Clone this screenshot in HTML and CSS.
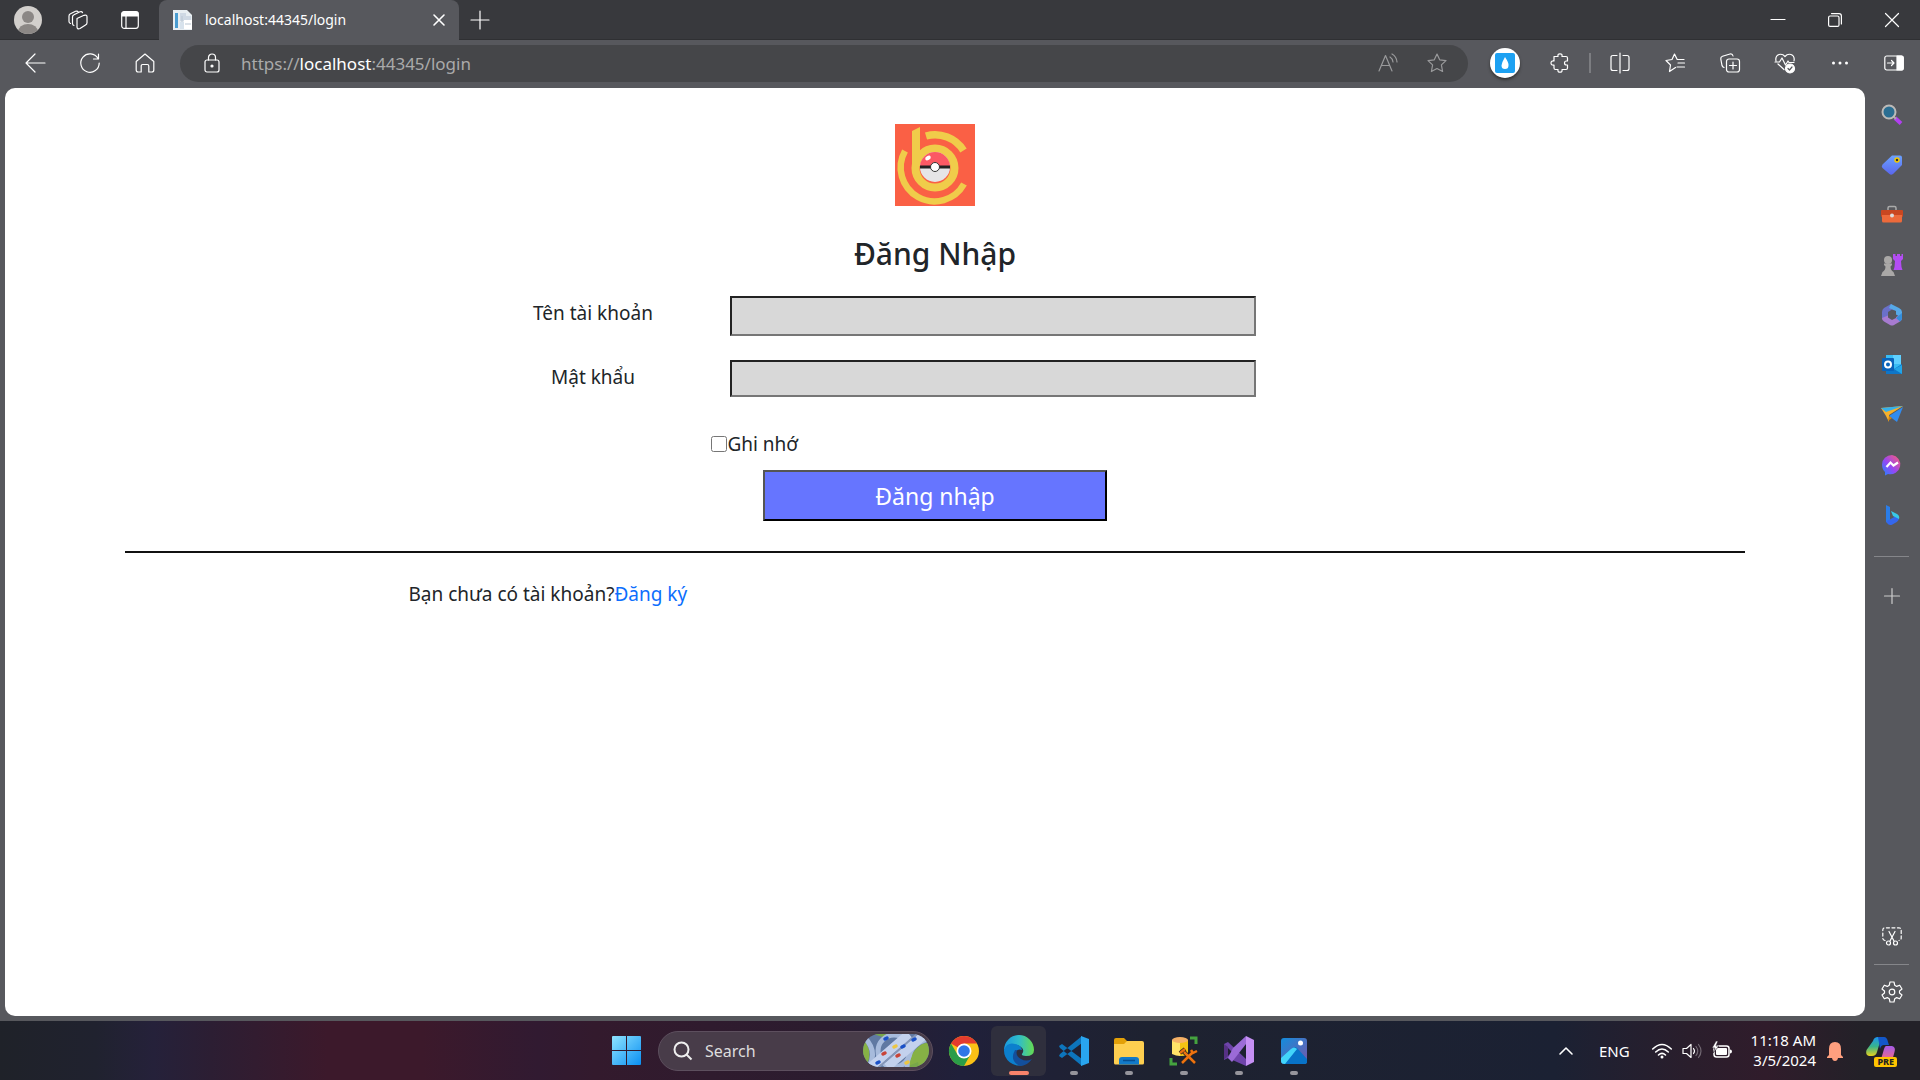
FILE: index.html
```html
<!DOCTYPE html>
<html lang="vi">
<head>
<meta charset="utf-8">
<title>localhost:44345/login</title>
<link rel="stylesheet" href="styles.css">
</head>
<body>
<div class="screen">
  <header class="tabstrip">
    <button class="avatar" aria-label="Profile"><svg viewBox="0 0 28 28" width="28" height="28"><defs><clipPath id="av"><circle cx="14" cy="14" r="14"/></clipPath></defs><g clip-path="url(#av)"><rect width="28" height="28" fill="#d2cfcc"/><circle cx="14" cy="11" r="6" fill="#8b8785"/><ellipse cx="14" cy="26" rx="10" ry="8" fill="#8b8785"/></g></svg></button>
    <button class="strip-btn" aria-label="Workspaces"><svg class="line" viewBox="0 0 22 22" width="22" height="22"><path d="M10 9.500l7-3.200q3-.8 3 1.500v6q0 1.500-1.500 2.200l-5.500 3.500q-3 1-3-1.500zM7 16.500q-1.500-.3-1.500-2V8q0-1.500 1.500-2.200l6-3q2-.6 2.500.8M3.500 14.500Q2 14 2 12.500V7q0-1.500 1.500-2.200l5-2.500q2-.6 2.500.5"/></svg></button>
    <button class="strip-btn" aria-label="Tab actions"><svg class="line" viewBox="0 0 20 20" width="20" height="20"><rect x="1.700" y="1.700" width="16.600" height="16.600" rx="2.500"/><path d="M2 3.500q0-1.500 1.500-1.500h13q1.500 0 1.500 1.500V6H2z" fill="#fff"/><path d="M6 6v12"/></svg></button>
    <div class="tab">
      <svg viewBox="0 0 20 20" width="20" height="20"><path d="M0 0h14l5 5v15H0z" fill="#e8eef2"/><path d="M2 3h3v15H2z" fill="#4a9cd0"/><path d="M7 3h6v3h5v5H7z" fill="#cfd9e4"/><path d="M7 12h4v7H7z" fill="#d7e2ec"/><path d="M11 10h8v9h-8z" fill="#fff"/><path d="M12 14h6M9 6v6" stroke="#b8c5d2"/></svg>
      <span class="tab-title">localhost:44345/login</span>
      <button class="tab-close" aria-label="Close tab"><svg class="line bold" viewBox="0 0 12 12" width="12" height="12"><path d="M1 1l10 10M11 1L1 11"/></svg></button>
    </div>
    <button class="new-tab" aria-label="New tab"><svg class="line" viewBox="0 0 18 18" width="18" height="18"><path d="M9 0v18M0 9h18"/></svg></button>
    <div class="window-controls">
      <button aria-label="Minimize"><svg class="line" viewBox="0 0 14 14" width="14" height="14"><path d="M0 6.500h14"/></svg></button>
      <button aria-label="Restore"><svg class="line" viewBox="0 0 14 14" width="14" height="14"><rect x=".6" y="3" width="10.400" height="10.400" rx="1.500"/><path d="M3.500.6h7.500q2.400 0 2.400 2.400v8"/></svg></button>
      <button aria-label="Close"><svg class="line" viewBox="0 0 14 14" width="14" height="14"><path d="M.5.5l13 13M13.500.5l-13 13"/></svg></button>
    </div>
  </header>

  <nav class="toolbar">
    <button class="tool" aria-label="Back"><svg class="line" viewBox="0 0 20 20" width="20" height="20"><path d="M20 10H1M10 1L1 10l9 9"/></svg></button>
    <button class="tool" aria-label="Refresh"><svg class="line" viewBox="0 0 20 20" width="20" height="20"><path d="M18 5.500A9.200 9.200 0 1 0 19.200 10M18.500 1v5h-5"/></svg></button>
    <button class="tool" aria-label="Home"><svg class="line" viewBox="0 0 20 20" width="20" height="20"><path d="M1.200 8.500L10 1l8.800 7.500V17q0 2-2 2h-3v-6q0-1.500-1.500-1.500h-4.600Q6.200 11.500 6.200 13v6h-3q-2 0-2-2z"/></svg></button>
    <div class="address">
      <svg class="line" viewBox="0 0 20 20" width="20" height="20"><rect x="3" y="7" width="14" height="12" rx="2"/><path d="M6.500 7V4.500a3.500 3.500 0 0 1 7 0V7"/><circle cx="10" cy="13" r="1" fill="#fff"/></svg>
      <span class="url">https://<b>localhost</b>:44345/login</span>
      <button class="dim" aria-label="Read aloud"><svg class="line" viewBox="0 0 20 20" width="20" height="20"><path d="M1 18L7.500 2.500 14 18M3.500 12.500h8M12 4q2.500 1.500 3 5M14 1q4.500 2.500 5 8"/></svg></button>
      <button class="dim" aria-label="Add to favorites"><svg class="line" viewBox="0 0 20 20" width="20" height="20"><path d="M10 1l2.700 5.800 6.300.8-4.600 4.300 1.200 6.600L10 15.500l-5.600 3 1.200-6.600L1 7.600l6.300-.8z"/></svg></button>
    </div>
    <button class="tool extension" aria-label="Extension"><svg viewBox="0 0 30 30" width="30" height="30"><circle cx="15" cy="15" r="15" fill="#fff"/><rect x="5" y="5" width="20" height="20" rx="2" fill="#1da1f2"/><path d="M15 9q4 6 3.500 8.500a3.500 3.500 0 0 1-7 0Q12 14 15 9z" fill="#fff"/></svg></button>
    <button class="tool" aria-label="Extensions"><svg class="line" viewBox="0 0 20 20" width="20" height="20"><path d="M4 3.500h4q-.5-2.700 2-2.700t2 2.700h4q1.500 0 1.500 1.500v3h-1q-2 0-2 2t2 2h1v3q0 1.500-1.500 1.500h-4q.5 2.700-2 2.700t-2-2.700H5.500Q4 16.500 4 15v-3q-3 .3-3-2t3-2z"/></svg></button>
    <span class="divider"></span>
    <button class="tool" aria-label="Split screen"><svg class="line" viewBox="0 0 20 20" width="20" height="20"><path d="M10 0v20M7 2.500H3q-2 0-2 2v11q0 2 2 2h4M13 2.500h4q2 0 2 2v11q0 2-2 2h-4"/></svg></button>
    <button class="tool" aria-label="Favorites"><svg class="line" viewBox="0 0 20 20" width="20" height="20"><path d="M10.500 14.500l-6 4 1-6.500L1 7.500l6-1L9.500 1l2.700 5.500H19M13 10h6.500M12 14h7.500"/></svg></button>
    <button class="tool" aria-label="Collections"><svg class="line" viewBox="0 0 20 20" width="20" height="20"><rect x="6.500" y="6" width="13" height="13" rx="2.500"/><path d="M13 9v7M9.500 12.500h7M4 14.500q-1.500-.5-2-2L.8 6Q.5 4 2.500 3.300L10 1q2.500-.5 3 2"/></svg></button>
    <button class="tool" aria-label="Browser essentials"><svg class="line" viewBox="0 0 20 20" width="20" height="20"><path d="M9 16.500L3 11M1 8Q0 3 4 1.500q3.500-1 6 2 2.500-3 6-2Q20 3 19 8M0 9h4.500L7 5l3.500 7L13 8l1 1.500h5"/><circle cx="15" cy="15.500" r="4.500" fill="#fff"/><path d="M13 15.500l1.500 1.500 2.500-3" stroke="#57585d"/></svg></button>
    <button class="tool" aria-label="More"><svg viewBox="0 0 20 20" width="20" height="20" fill="#fff"><circle cx="3.500" cy="10" r="1.500"/><circle cx="10" cy="10" r="1.500"/><circle cx="16.500" cy="10" r="1.500"/></svg></button>
    <button class="tool side-toggle" aria-label="Sidebar"><svg class="line" viewBox="0 0 20 20" width="20" height="20"><rect x=".8" y="3" width="18.400" height="14" rx="2"/><path d="M13 3h4.500q1.700 0 1.700 1.700v10.600q0 1.700-1.700 1.700H13z" fill="#fff"/><path d="M3.500 10h6M7.500 7.500L10 10l-2.500 2.500"/></svg></button>
  </nav>

  <div class="body-area">
    <main class="page">
      <form class="login">
        <svg class="logo" viewBox="0 0 80 82" width="80" height="82"><rect width="80" height="82" fill="#fa6045"/><g fill="none" stroke="#f0cc4a"><path d="M31 12A33.500 33.500 0 0 1 68.500 26.500" stroke-width="7.500"/><path d="M69 60A33.500 33.500 0 1 1 10 27" stroke-width="6.500"/><circle cx="40" cy="44" r="19.500" stroke-width="8"/></g><path d="M17 7l8-4v39h-8z" fill="#f0cc4a"/><circle cx="40" cy="43" r="15" fill="#e6e5e7"/><path d="M25 43a15 15 0 0 1 30 0z" fill="#fb5964"/><path d="M25 43h30" stroke="#222" stroke-width="3"/><circle cx="40" cy="43" r="4.500" fill="#fff" stroke="#333"/><ellipse cx="33" cy="34" rx="3" ry="2" fill="#fff" transform="rotate(-30 33 34)"/></svg>
        <h1>Đăng Nhập</h1>
        <div class="field">
          <label for="user">Tên tài khoản</label>
          <input class="entry tall" id="user" type="text">
        </div>
        <div class="field">
          <label for="pass">Mật khẩu</label>
          <input class="entry" id="pass" type="password">
        </div>
        <div class="remember"><input id="remember" type="checkbox"><label for="remember">Ghi nhớ</label></div>
        <button class="submit" type="button">Đăng nhập</button>
        <hr>
        <p class="register">Bạn chưa có tài khoản?<a href="#">Đăng ký</a></p>
      </form>
    </main>

    <aside class="sidebar">
      <button aria-label="Search"><svg viewBox="0 0 22 22" width="22" height="22"><path d="M14 14l6 5.500" stroke="#b13ff0" stroke-width="4"/><path d="M12 12l3 3" stroke="#aaa" stroke-width="2"/><circle cx="8" cy="8" r="6.500" fill="#2b6e92" stroke="#bdbab8" stroke-width="2"/></svg></button>
      <button aria-label="Shopping"><svg viewBox="0 0 22 22" width="22" height="22"><defs><linearGradient id="tg" x2="0" y2="1"><stop stop-color="#6ba2ff"/><stop offset="1" stop-color="#5a66ee"/></linearGradient></defs><path d="M11 1.500h8q2 0 2 2V11l-9 9q-2 1.500-3.500 0L1.500 14q-1.500-1.500 0-3.500z" fill="url(#tg)"/><circle cx="16" cy="6" r="2" fill="#333" stroke="#f5c900" stroke-width="1.500"/></svg></button>
      <button aria-label="Tools"><svg viewBox="0 0 22 22" width="22" height="22"><path d="M7 6V4q0-1.500 1.500-1.500h5Q15 2.500 15 4v2" fill="none" stroke="#aaa" stroke-width="1.500"/><rect y="6" width="22" height="7" rx="1" fill="#c94721"/><path d="M1 11h20v6q0 1.500-1.500 1.500h-17Q1 18.500 1 17z" fill="#ed6a3b"/><circle cx="11" cy="11.500" r="2" fill="#ddd"/></svg></button>
      <button aria-label="Games"><svg viewBox="0 0 22 24" width="22" height="24"><path d="M12 1h2.500v2h1.500V1h3v2h1.500V1H22v5l-2 2 .5 6 1 3h-9l1-3 .5-6-2-2z" fill="#b34df3"/><g fill="#aaa8a7"><circle cx="7" cy="7" r="4"/><path d="M3 10.500h8V12l-1.500 1.500q0 3.500 3 5.500l1.500 4H0l1.500-4q3-2 3-5.500L3 12z"/></g></svg></button>
      <button aria-label="Microsoft 365"><svg viewBox="0 0 22 22" width="22" height="22"><path d="M10 0L3 4Q1 5.500 1 8v7l6 3V9l8-4z" fill="#6a70c8"/><path d="M10 0l8 4q3 1.500 3 4v6l-6-3.500V7L8 4z" fill="#56a9e8"/><path d="M1 14l6-2.500 5 3L21 10v4q0 2.500-2 3.500l-6 3.500q-2 1-4 0l-6-3.500q-2-1-2-3.500z" fill="#a77bd0"/><path d="M7 8l4-2.500L15 8v6l-4 2-4-2.500z" fill="#57585d"/><path d="M15 14l6-5v5q0 2-2 3.500z" fill="#348fdc"/></svg></button>
      <button aria-label="Outlook"><svg viewBox="0 0 22 22" width="22" height="22"><path d="M5 1h15v17H5z" fill="#38bdf5"/><path d="M12 1h8v9h-8z" fill="#5fd0ff"/><path d="M5 13l8 2 8-5v10H5z" fill="#0f76c8"/><path d="M21 11v9l-8-5z" fill="#22a5e8"/><rect x="1" y="4" width="12" height="13" rx="1" fill="#0a63ba"/><circle cx="7" cy="10.500" r="3" fill="none" stroke="#fff" stroke-width="2"/></svg></button>
      <button aria-label="Drop"><svg viewBox="0 0 22 22" width="22" height="22"><path d="M0 4l22-2L8 11v7l-3-6z" fill="#f5b02b"/><path d="M0 4l22-2L5 8z" fill="#35b1ec"/><path d="M22 3l-6 15-8-6z" fill="#318cf0"/><path d="M8 12l-1 5 4-3z" fill="#d3820b"/></svg></button>
      <button aria-label="Messenger"><svg viewBox="0 0 22 22" width="22" height="22"><defs><linearGradient id="ms" x1="0" y1="1" x2="1" y2="0"><stop stop-color="#168bff"/><stop offset=".45" stop-color="#9646f5"/><stop offset="1" stop-color="#ff5e70"/></linearGradient></defs><path d="M11 1a10 9.700 0 1 1-4 19l-3 1.500V18Q1 15 1 10.500A10 9.500 0 0 1 11 1z" fill="url(#ms)"/><path d="M5.500 13l4-4.500 3 3 4.500-3" fill="none" stroke="#fff" stroke-width="2.200"/></svg></button>
      <button aria-label="Bing"><svg viewBox="0 0 22 22" width="22" height="22"><path d="M5 1l4 2v13l-1 4.500L5 18z" fill="#2a7de8"/><path d="M5 17l3-1 7-4 3 2q0 3-4 5l-3 1.700q-2 1-4-.7z" fill="#3467ed"/><path d="M10 7l6 3q3 2 2 5l-6-3z" fill="#37c9e8"/></svg></button>
      <span class="rule upper"></span>
      <button aria-label="Customize"><svg class="line soft" viewBox="0 0 16 16" width="16" height="16"><path d="M8 .5v15M.5 8h15"/></svg></button>
      <span class="grow"></span>
      <button aria-label="Screenshot"><svg class="line" viewBox="0 0 20 20" width="20" height="20"><path d="M3 14.500Q.8 14 .8 12V4Q.8 1.800 3 1.800h14q2.200 0 2.200 2.200v8q0 2-2.200 2.500" stroke-dasharray="3 2.500"/><path d="M7 5.500l5 9.500M13 5.500L8 15"/><circle cx="6.500" cy="17" r="2"/><circle cx="13.500" cy="17" r="2"/></svg></button>
      <span class="rule"></span>
      <button aria-label="Settings"><svg class="line" viewBox="0 0 22 22" width="22" height="22"><path d="M9 1h4l.7 3.200 2 1.200 3-1.200 2.300 3.800-2.500 2v2l2.500 2-2.300 3.800-3-1.200-2 1.200L13 21H9l-.7-3.200-2-1.200-3 1.200L1 14l2.500-2v-2L1 8l2.300-3.800 3 1.200 2-1.200z"/><circle cx="11" cy="11" r="2.800"/></svg></button>
    </aside>
  </div>

  <footer class="taskbar">
    <span></span>
    <div class="apps">
      <button class="app" aria-label="Start"><svg viewBox="0 0 29 29" width="29" height="29"><defs><linearGradient id="win" x2="1" y2="1"><stop stop-color="#8fe4ff"/><stop offset="1" stop-color="#0a8ff2"/></linearGradient></defs><path d="M0 1q0-1 1-1h13v14H0zM15 0h13q1 0 1 1v13H15zM0 15h14v14H1q-1 0-1-1zM15 15h14v13q0 1-1 1H15z" fill="url(#win)"/></svg></button>
      <div class="search">
        <svg viewBox="0 0 20 20" width="20" height="20" fill="none" stroke="#eee" stroke-width="2"><circle cx="8.500" cy="8.500" r="7"/><path d="M13.500 13.500l5 5"/></svg>
        <input type="text" placeholder="Search" aria-label="Search">
        <svg viewBox="0 0 66 33" width="66" height="33"><defs><clipPath id="pl"><rect width="66" height="33" rx="16.500"/></clipPath></defs><g clip-path="url(#pl)"><rect width="66" height="33" fill="#6079a2"/><path d="M0 5q11 12 3 28H0zM42 33q12-26 24-24v24z" fill="#86b145"/><path d="M10 0h22l-6 5zM55 28l-12 5h13z" fill="#78a74a"/><g fill="none" stroke="#a7bbdc" stroke-width="5"><circle cx="31" cy="17" r="16"/><path d="M1 3q14 14 5 30M66 5Q45 9 44 33"/></g><path d="M8 33L46 0M24 33L62 0" stroke="#c3d1ed" stroke-width="9"/><path d="M16 33L54 0" stroke="#8596b8" stroke-width="2"/><g stroke-width="3.500" stroke-linecap="round"><path d="M14 29l2-1M22 5l2-1M39 13l2-1M50 6l2-1" stroke="#1a50c8"/><path d="M20 20l2-1M34 22l2-1" stroke="#c84438"/><path d="M31 13l2-1M43 29l2-1" stroke="#ecc643"/></g></g></svg>
      </div>
      <button class="app" aria-label="Chrome"><svg viewBox="0 0 30 30" width="30" height="30"><circle cx="15" cy="15" r="15" fill="#fbc116"/><path d="M15 15L2 7.500A15 15 0 0 1 28 7.500H15z" fill="#e33b2e"/><path d="M2 7.500A15 15 0 0 0 15 30l6.500-11.500L15 15 8.500 18.500z" fill="#2a9d48"/><circle cx="15" cy="15" r="7.500" fill="#fff"/><circle cx="15" cy="15" r="5.800" fill="#2e76e8"/></svg></button>
      <button class="app active" aria-label="Edge"><svg viewBox="0 0 30 30" width="30" height="30"><defs><linearGradient id="eg" x2="1"><stop stop-color="#1998df"/><stop offset=".5" stop-color="#30bdc9"/><stop offset="1" stop-color="#66dc50"/></linearGradient></defs><path d="M0 14A15 15 0 0 1 30 14q0 6-8 6-5 0-4-2 3-4-1-7Q10 6 0 14z" fill="url(#eg)"/><path d="M0 14Q3 6 11 8q6 1 7 6-6-2-7 5 0 6 8 10A15 15 0 0 1 0 14z" fill="#0c7fcd"/><path d="M11 14q-6 11 5 16 7 0 12-7-6 3-11 0-6-3-4-9z" fill="#134f9c"/></svg></button>
      <button class="app running" aria-label="Visual Studio Code"><svg viewBox="0 0 30 30" width="30" height="30"><path d="M0 10l3-2 20 15v7L1 12zM0 20l3 2L23 7V0L1 18z" fill="#0d75bc"/><path d="M22 0l8 3v24l-8 3z" fill="#29a5ef"/></svg></button>
      <button class="app running" aria-label="File Explorer"><svg viewBox="0 0 30 30" width="30" height="30"><path d="M0 4q0-2 2-2h8l3 3v6H0z" fill="#e3a008"/><path d="M0 8h10l3-3h15q2 0 2 2v20q0 1.500-1.500 1.500h-27Q0 28.500 0 27z" fill="#fecf50"/><path d="M5 28.500V24q0-3 3-3h14q3 0 3 3v4.500z" fill="#127ac8"/><path d="M9 24.500h12" stroke="#064e91" stroke-width="1.500"/></svg></button>
      <button class="app running" aria-label="SQL Server"><svg viewBox="0 0 30 30" width="30" height="30"><path d="M3 4v14q8 4 16 0V4z" fill="#ffe368"/><path d="M11 4v16q5 0 8-2V4z" fill="#f3c313"/><ellipse cx="11" cy="4" rx="8" ry="3" fill="#f5b166"/><path d="M21 2h6v6M2 22v6h6" stroke="#45a33f" stroke-width="3" fill="none"/><path d="M13 27l11-11M15 16l11 11M11 17l5-4M22 14l2 3 4-2" stroke="#222" stroke-width="4" fill="none"/><path d="M13 27l11-11M15 16l11 11M11 17l5-4M22 14l2 3 4-2" stroke="#ee720f" stroke-width="2.500" fill="none"/></svg></button>
      <button class="app running" aria-label="Visual Studio"><svg viewBox="0 0 30 30" width="30" height="30"><path d="M0 8l4-2 18 17v7L4 22l-4 2z" fill="#6e44aa"/><path d="M4 12v8l4-4z" fill="#1e202e"/><path d="M4 22l4 4L22 8V0L9 12z" fill="#9b6bd7"/><path d="M22 0l8 4v22l-8 4z" fill="#c590f4"/><path d="M0 8l4 3v9l-4 4z" fill="#573185"/></svg></button>
      <button class="app running" aria-label="Photos"><svg viewBox="0 0 26 26" width="26" height="26"><defs><linearGradient id="ph" x2="1" y2="1"><stop stop-color="#128ddd"/><stop offset="1" stop-color="#7857a8"/></linearGradient></defs><rect width="26" height="26" rx="3" fill="url(#ph)"/><path d="M1 25L12 10q2-2 4 0l10 11v3q0 2-3 2H3z" fill="#0873c8"/><path d="M0 20l10-9q3-3 6 0L4 26Q0 26 0 23z" fill="#42d5fa"/><circle cx="19.500" cy="5" r="2.500" fill="#fff"/></svg></button>
    </div>
    <div class="tray">
      <button aria-label="Show hidden icons"><svg class="line tick" viewBox="0 0 14 10" width="14" height="10"><path d="M1 8l6-6 6 6"/></svg></button>
      <span class="lang">ENG</span>
      <div class="status">
        <svg class="line tick" viewBox="0 0 20 16" width="20" height="16"><path d="M.7 6q9.300-9 18.600 0M3.700 9q6.300-6 12.600 0M6.500 12q3.500-3.300 7 0"/><circle cx="10" cy="14" r="1.500" fill="#fff" stroke="none"/></svg>
        <svg class="line" viewBox="0 0 20 16" width="20" height="16"><path d="M1 5.500h3.500L9 1.500v13l-4.500-4H1zM11.500 5.500q2 2.500 0 5"/><path d="M14 3.500q3.500 4.500 0 9M16.500 1.500q5 6.500 0 13" stroke="#716872"/></svg>
        <svg viewBox="0 0 20 16" width="20" height="16"><rect x="2" y="3" width="15" height="11" rx="2.500" fill="none" stroke="#fff" stroke-width="1.500"/><rect x="4" y="5" width="11" height="7" rx="1" fill="#fff"/><path d="M18 6.500q2 0 2 2t-2 2z" fill="#fff"/><path d="M4-2L0 5h3l-2 5 6-7H4l2-5z" fill="#fff" stroke="#2a1e2c" stroke-width=".6"/></svg>
      </div>
      <div class="clock"><span>11:18 AM</span><span>3/5/2024</span></div>
      <svg class="bell" viewBox="0 0 16 20" width="16" height="20"><path d="M2 14V8Q2 1 8 1t6 7v6l2 2v1H0v-1zM5 17h6q-.5 3-3 3t-3-3z" fill="#ffa07f"/></svg>
      <button class="copilot" aria-label="Copilot"><svg viewBox="0 0 30 30" width="30" height="30"><defs><linearGradient id="c1" x2="0" y2="1"><stop stop-color="#1c95f0"/><stop offset=".5" stop-color="#38b48c"/><stop offset="1" stop-color="#e8d21c"/></linearGradient><linearGradient id="c2" x2="0" y2="1"><stop stop-color="#a45be8"/><stop offset="1" stop-color="#f76a7c"/></linearGradient></defs><path d="M7 5q1-4 5-4h6q-3 1-4 5l-3 10q-1 4-5 4H3q-4-1-2.500-6z" fill="url(#c1)"/><path d="M12 1h6q3 0 4 5l1 3h-5q-3 0-4 4z" fill="#1357c8"/><path d="M20 10h6q4 1 2.500 6L26 25H12q3-1 4-5l2-7q1-3 2-3z" fill="url(#c2)"/></svg><span class="badge">PRE</span></button>
    </div>
  </footer>
</div>
</body>
</html>
```
FILE: styles.css
```css
* { box-sizing: border-box; }
body {
  margin: 0;
  font-family: "Noto Sans", "Open Sans", sans-serif;
  background: #57585d;
}
button {
  padding: 0;
  border: 0;
  background: none;
  font-family: inherit;
  color: inherit;
  display: flex;
  align-items: center;
  justify-content: center;
}
svg { display: block; flex: none; overflow: visible; }
.line { fill: none; stroke: #fff; stroke-width: 1.2; stroke-linecap: round; stroke-linejoin: round; }
.bold, .tick { stroke-width: 1.6; }
.soft { stroke: #ccc; }
.screen { min-height: 100vh; display: flex; flex-direction: column; }

.tabstrip {
  display: flex;
  align-items: center;
  height: 40px;
  padding-left: 14px;
  background: #38393d;
  border-bottom: 1px solid #2f3033;
}
.avatar { width: 28px; height: 28px; margin-right: 22px; }
.strip-btn { width: 28px; height: 28px; margin-right: 24px; }
.strip-btn + .strip-btn { margin-right: 15px; }
.tab {
  display: flex;
  align-items: center;
  width: 300px;
  height: 40px;
  padding: 0 14px;
  background: #57585d;
  border-radius: 8px 8px 0 0;
}
.tab-title { flex: 1; margin-left: 12px; font-size: 14px; color: #fff; }
.new-tab { width: 42px; height: 40px; }
.window-controls { display: flex; margin-left: auto; }
.window-controls button { width: 57px; height: 40px; }

.toolbar {
  display: flex;
  align-items: center;
  height: 48px;
  padding: 0 0 2px 7px;
  background: #57585d;
}
.tool { width: 55px; height: 40px; }
.address {
  flex: 1;
  display: flex;
  align-items: center;
  height: 37px;
  margin-left: 8px;
  padding: 0 21px 0 22px;
  border-radius: 19px;
  background: #454649;
}
.url { flex: 1; margin-left: 19px; font-size: 17px; color: #aaa; }
.url b { font-weight: 400; color: #fff; }
.dim { width: 20px; height: 30px; opacity: 0.45; }
.dim + .dim { margin-left: 29px; }
.extension { margin-left: 9px; }
.extension svg { border-radius: 50%; box-shadow: 0 2px 3px #333; }
.divider { width: 2px; height: 20px; margin: 0 1px 0 2px; background: #7c7d81; }
.side-toggle { width: 53px; }

.body-area { flex: 1; display: flex; }
.page {
  flex: 1;
  margin: 0 0 5px 5px;
  padding: 36px 120px;
  background: #fff;
  border-radius: 10px;
  color: #212529;
  font-size: 19px;
  line-height: 30px;
}
.logo { margin: 0 auto; }
h1 { margin: 24px 0 18px; font-size: 30px; line-height: 48px; font-weight: 500; text-align: center; }
.field {
  display: grid;
  grid-template-columns: 210fr 525fr;
  gap: 32px;
  width: 70%;
  margin-bottom: 24px;
  padding: 0 2% 0 22.4%;
}
.field { width: 69.8%; padding-right: 0; }
.field label { padding-top: 2px; text-align: center; }
.entry {
  min-width: 0;
  height: 37px;
  padding: 0 8px;
  border: 2px solid #767676;
  border-top-color: #222;
  border-left-color: #222;
  border-radius: 0;
  background: #d8d8d8;
  font: inherit;
}
.tall { height: 40px; }
.remember { display: flex; align-items: center; margin: 32px 0 11px; padding-left: 36.2%; }
.remember input { width: 16px; height: 16px; margin: 0; }
.submit {
  width: 21.2%;
  height: 51px;
  margin: 0 auto 30px;
  border: 2px solid #000;
  border-top-color: #555;
  border-left-color: #555;
  background: #6675ff;
  color: #fff;
  font-size: 23px;
}
hr { margin: 0 0 26px; border: 0; border-top: 2px solid #111; }
.register { margin: 0; padding-left: 17.5%; }
.register a { color: #0d6efd; text-decoration: none; }

.sidebar {
  width: 55px;
  display: flex;
  flex-direction: column;
  align-items: center;
  padding: 2px 2px 4px 0;
}
.sidebar button { width: 50px; height: 50px; flex: none; }
.rule { width: 35px; height: 1px; margin: 3px 0 2px; background: #85868a; }
.upper { margin: 16px 0 14px; }
.grow { flex: 1; }

.taskbar {
  display: grid;
  grid-template-columns: 1fr auto 1fr;
  height: 59px;
  color: #fff;
  background: linear-gradient(90deg, #1f2229 0, #20222f 5%, #25213a 8%, #2c1e33 11%, #3c192b 17%, #3c192b 22%, #311a31 28%, #331a2d 31%, #2b1c2f 43%, #20203a 50%, #1e2230 60%, #1b2133 81%, #2a1e2c 88%, #301c2b 92%, #232128 97%);
}
.apps { display: flex; align-items: center; }
.app { position: relative; width: 55px; height: 50px; }
.search {
  display: flex;
  align-items: center;
  width: 275px;
  height: 40px;
  margin: 0 3px 0 4px;
  padding: 0 3px 0 14px;
  border: 1px solid #5d4f5e;
  border-radius: 20px;
  background: #483c49;
}
.search input {
  flex: 1;
  min-width: 0;
  margin-left: 12px;
  padding: 0;
  border: 0;
  background: none;
  font: 16px "Noto Sans", sans-serif;
  color: #ddd;
}
.search input::placeholder { color: #ddd; }
.active { background: #2f2f3d; border-radius: 6px; }
.running::after, .active::after {
  content: "";
  position: absolute;
  bottom: 1px;
  left: 50%;
  width: 8px;
  height: 4px;
  border-radius: 2px;
  background: #96959c;
  transform: translateX(-50%);
}
.active::after { width: 20px; background: #f8836b; }
.tray { display: flex; align-items: center; justify-content: flex-end; padding-right: 24px; }
.lang { margin: 0 22px 0 26px; font-size: 15px; }
.status { display: flex; gap: 10px; }
.clock {
  display: flex;
  flex-direction: column;
  margin: 0 11px 2px 19px;
  font-size: 15px;
  line-height: 20px;
  text-align: right;
}
.bell { margin-right: 23px; }
.copilot { position: relative; }
.badge {
  position: absolute;
  right: -1px;
  bottom: -1px;
  padding: 0 3px;
  border-radius: 2px;
  background: #ffc400;
  color: #222;
  font-size: 9px;
  line-height: 10px;
  font-weight: 800;
}
```
